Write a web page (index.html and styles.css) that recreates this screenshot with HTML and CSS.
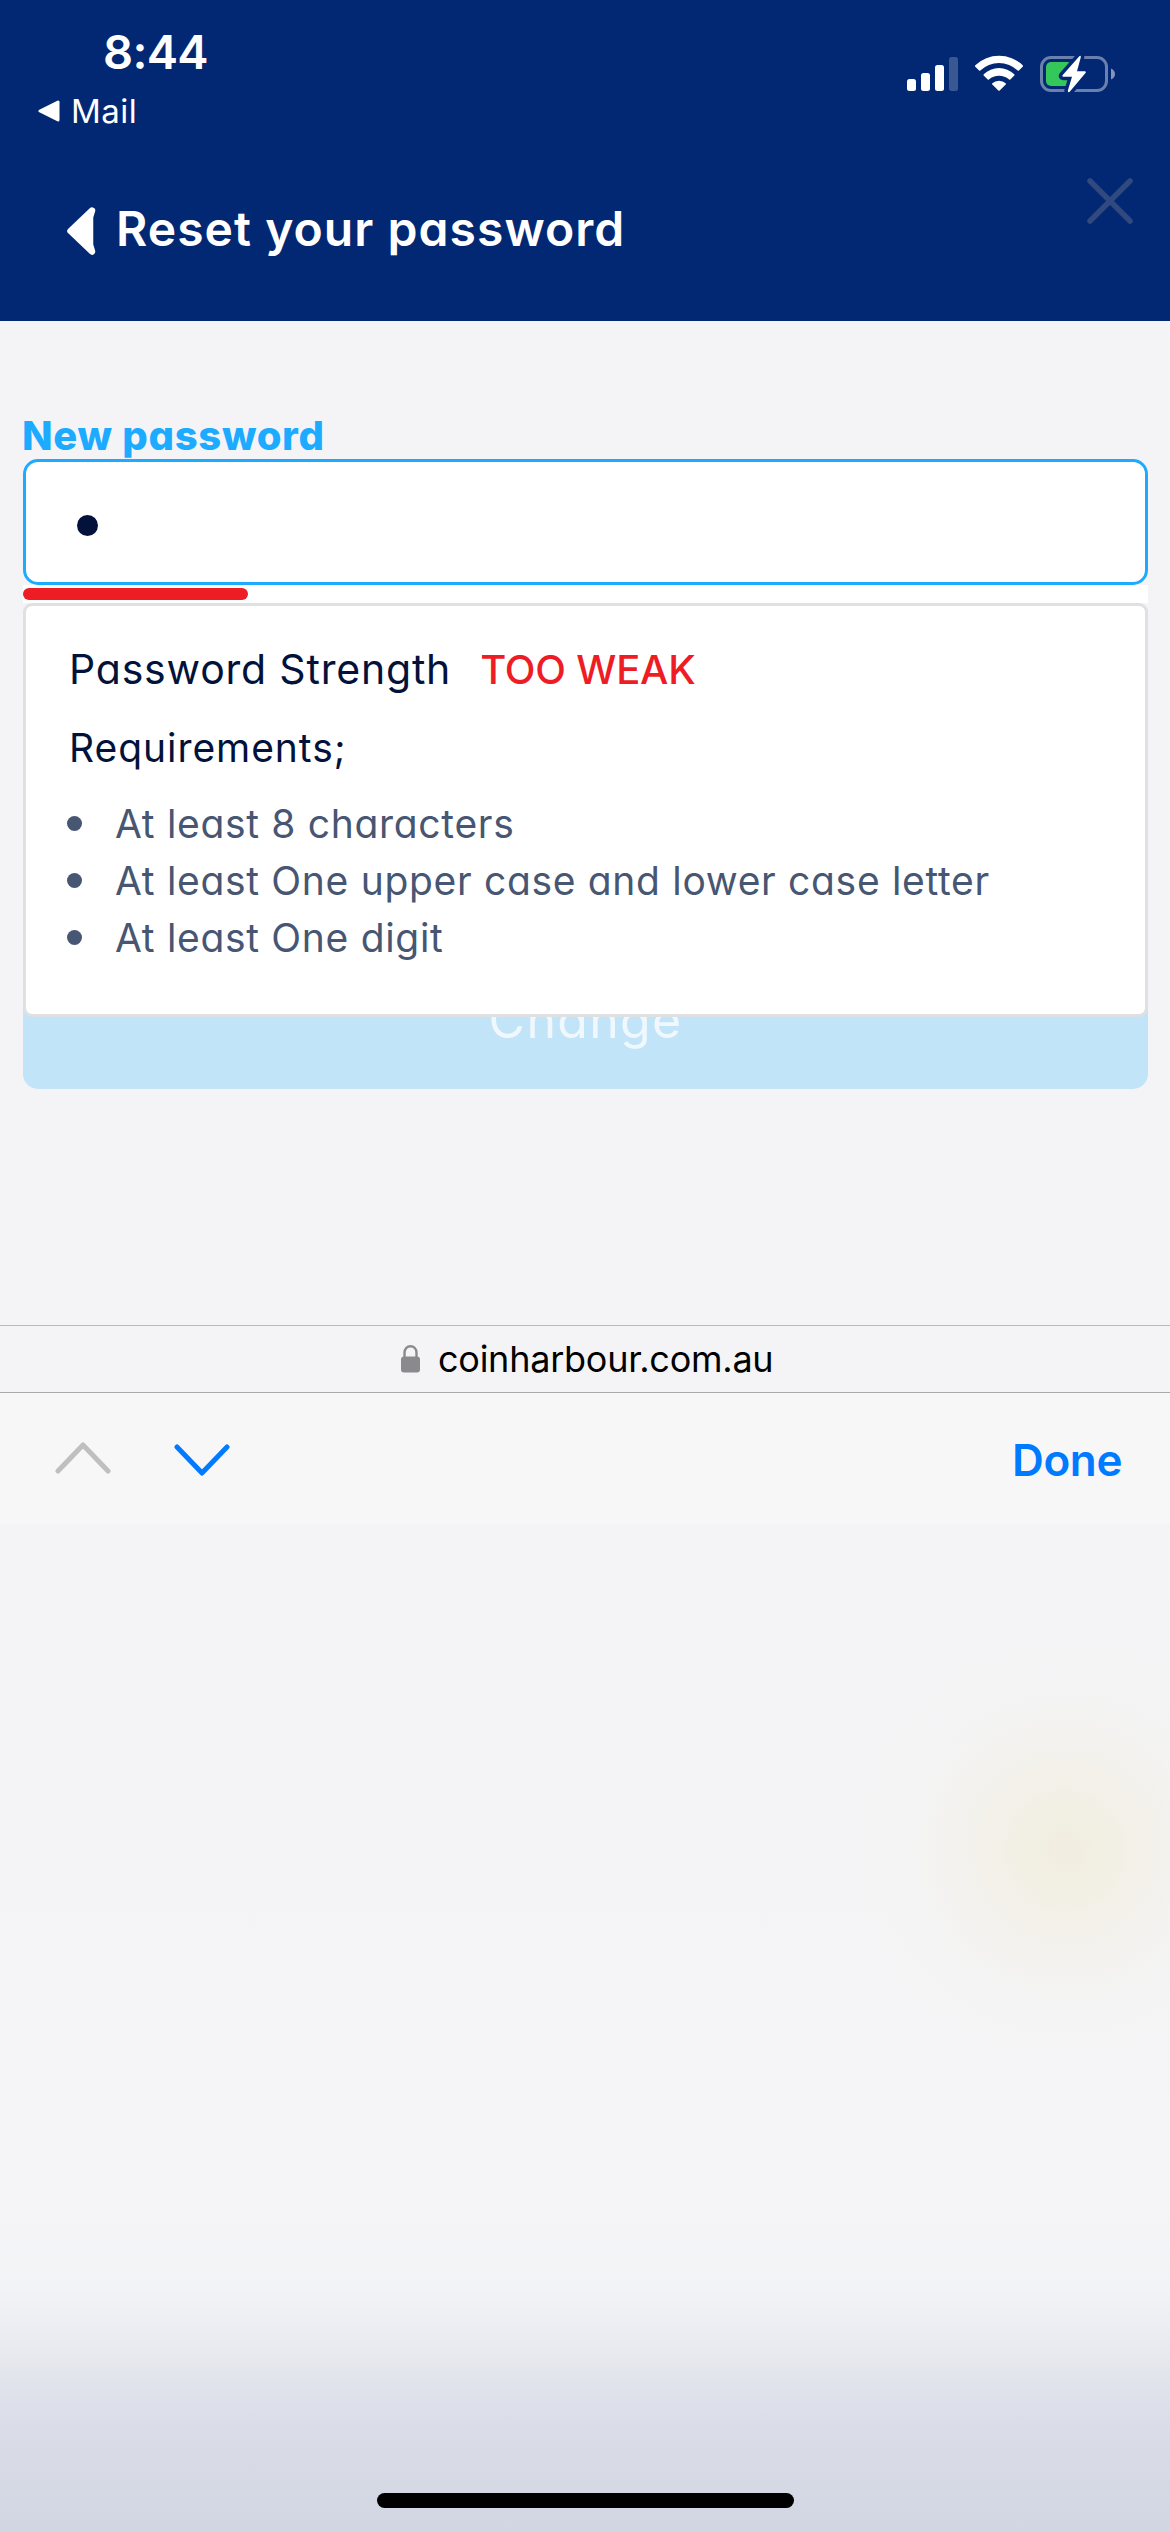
FILE: index.html
```html
<!DOCTYPE html>
<html lang="en">
<head>
<meta charset="utf-8">
<title>Reset your password</title>
<link rel="stylesheet" href="styles.css">
</head>
<body>
<header class="header">
  <div class="status">
    <div class="status-left">
      <div class="time"><span>8:44</span></div>
      <div class="back-app">
        <svg width="22" height="22" viewBox="0 0 22 22"><path d="M20 2v18L2 11z" fill="#fff" stroke="#fff" stroke-width="3" stroke-linejoin="round"/></svg>
        <span>Mail</span>
      </div>
    </div>
    <svg class="status-icons" width="210" height="42" viewBox="906 53 210 42">
      <g fill="#fff">
        <rect x="907" y="79" width="9" height="12" rx="2.5"/>
        <rect x="921" y="73" width="9" height="18" rx="2.5"/>
        <rect x="935" y="65" width="9" height="26" rx="2.5"/>
        <rect x="949" y="57" width="9" height="34" rx="2.5" opacity=".22"/>
        <path d="M975.3 65.2Q974.600 66 975.300 66.800L979.100 70.600Q979.700 71 980.300 70.500A27 27 0 0 1 1017.700 70.500Q1018.300 71 1018.900 70.600L1022.700 66.800Q1023.400 66 1022.700 65.200A34.500 34.500 0 0 0 975.300 65.200Z"/>
        <path d="M983.700 74.300Q983.200 75 983.700 75.500L987.700 79.400Q988.300 79.900 988.900 79.400A15.500 15.500 0 0 1 1009.100 79.400Q1009.700 79.900 1010.300 79.400L1014.300 75.500Q1014.800 75 1014.300 74.300A22 22 0 0 0 983.700 74.300Z"/>
        <path d="M992.300 83.300Q991.800 84 992.300 84.500L998.300 90.500Q999 91.200 999.700 90.500L1005.700 84.500Q1006.200 84 1005.700 83.300A10 10 0 0 0 992.300 83.300Z"/>
      </g>
      <rect x="1041.500" y="57.500" width="65" height="33" rx="9.500" fill="none" stroke="#6b80ad" stroke-width="3"/>
      <path d="M1111 68.500Q1115 70.500 1115 74T1111 79.500Z" fill="#8594ba"/>
      <rect x="1046" y="62" width="26" height="24" rx="5" fill="#34c759"/>
      <path class="bolt" d="M1079.300 56.200L1062.500 75.200Q1061.700 76.600 1063.300 76.700H1072L1067.800 90.800Q1067.700 93 1069.700 91.800L1085.700 72.700Q1086.500 71.300 1084.900 71.200H1077L1080.800 57.200Q1081 55 1079.300 56.200Z"/>
    </svg>
  </div>
  <div class="title-row">
    <svg width="29" height="48" viewBox="0 0 29 48"><path d="M25 3.500L3.500 24L25 44.500L23 38V10Z" fill="#fff" stroke="#fff" stroke-width="6.500" stroke-linejoin="round"/></svg>
    <h1><span>Reset your password</span></h1>
    <svg class="close" width="46" height="46" viewBox="0 0 46 46"><path d="M3 3L43 43M43 3L3 43" stroke="#30497f" stroke-width="5.500" stroke-linecap="round"/></svg>
  </div>
</header>

<main class="form">
  <label class="label"><span>New password</span></label>
  <div class="field">
    <div class="input"><i class="mask"></i></div>
    <div class="meter"><div class="meter-fill"></div></div>
    <section class="hint">
      <p class="strength"><span>Password Strength</span><strong>TOO WEAK</strong></p>
      <p class="req"><span>Requirements;</span></p>
      <ul>
        <li><span>At least 8 characters</span></li>
        <li><span>At least One upper case and lower case letter</span></li>
        <li><span>At least One digit</span></li>
      </ul>
    </section>
  </div>
  <div class="submit"><span>Change</span></div>
</main>

<div class="address">
  <svg width="19" height="28" viewBox="0 0 19 28"><path d="M3.500 13V8C3.500 -1 15.500 -1 15.500 8V13" fill="none" stroke="#8a898e" stroke-width="2.400"/><rect y="11.500" width="19" height="16" rx="3" fill="#8a898e"/></svg>
  <span>coinharbour.com.au</span>
</div>
<nav class="accessory">
  <svg width="56" height="36" viewBox="0 0 56 36"><path d="M3 30L28 4L53 30" fill="none" stroke="#bfbfbf" stroke-width="5" stroke-linecap="round" stroke-linejoin="round"/></svg>
  <svg width="56" height="36" viewBox="0 0 56 36"><path d="M3 6L28 32L53 6" fill="none" stroke="#007aff" stroke-width="5" stroke-linecap="round" stroke-linejoin="round"/></svg>
  <span class="done">Done</span>
</nav>
<div class="keyboard"><div class="home"></div></div>
</body>
</html>
```
FILE: styles.css
```css
* { box-sizing: border-box; margin: 0; padding: 0; }
body {
  width: 1170px;
  height: 2532px;
  display: flex;
  flex-direction: column;
  background: #f4f4f7;
  font-family: Inter, "Liberation Sans", sans-serif;
  white-space: nowrap;
  overflow: hidden;
}
svg { display: block; flex: none; }
.header { height: 321px; background: #022873; color: #fff; }
.status { height: 131px; display: flex; justify-content: space-between; padding: 22px 54px 0 38px; }
.time { padding-left: 65px; font-size: 47px; line-height: 60px; font-weight: 600; letter-spacing: -.7px; }
.back-app { margin-top: 9px; display: flex; align-items: center; gap: 11px; font-size: 33px; line-height: 40px; font-weight: 400; letter-spacing: .5px; }
.status-icons { margin-top: 31px; }
.bolt { fill: #fff; stroke: #022873; stroke-width: 7px; paint-order: stroke; stroke-linejoin: round; }
.title-row { height: 190px; display: flex; align-items: flex-start; padding: 68px 37px 0 67px; }
.title-row svg:first-child { margin-top: 8px; }
h1 { margin-left: 20px; font-size: 48px; line-height: 59px; font-weight: 600; letter-spacing: 1.05px; }
h1, .form { font-feature-settings: "cv11"; }
.title-row .close { margin: -21px 0 0 auto; }

.form { height: 1004px; padding: 90px 22px 0 23px; color: #03123a; }
.label { display: block; height: 48px; margin-left: -1px; font-size: 40px; line-height: 49px; font-weight: 800; letter-spacing: .7px; color: #1cabff; }
.field { position: relative; height: 144px; }
.input { position: relative; height: 126px; border: 3px solid #1cabff; border-radius: 15px; background: #fff; display: flex; align-items: center; padding-left: 51px; padding-top: 7px; }
.mask { width: 21px; height: 21px; border-radius: 50%; background: #03123a; }
.meter { height: 18px; padding-top: 3px; background: #fff; }
.meter-fill { width: 20%; height: 12px; border-radius: 6px; background: #ee1c24; }
.hint { position: absolute; top: 144px; left: 0; right: 0; height: 414px; border: 3px solid #dfe0e2; border-radius: 9px; background: #fff; padding: 34px 0 0 43px; }
.strength { display: flex; gap: 29px; font-size: 41px; line-height: 59px; height: 60px; letter-spacing: .8px; }
.strength strong { font-size: 40px; font-weight: 500; letter-spacing: -.2px; color: #ee1c24; }
.req { margin-top: 23px; font-size: 39px; line-height: 50px; letter-spacing: .95px; }
ul { margin-top: 22px; list-style: none; color: #475672; }
li { display: flex; align-items: center; gap: 33px; height: 57px; margin-left: -2px; font-size: 39px; line-height: 57px; letter-spacing: .68px; }
li::before { content: ""; width: 15px; height: 15px; border-radius: 50%; background: #475672; }
.submit { margin-top: 351px; height: 135px; border-radius: 15px; background: #c2e4f8; color: #f0f8fd; font-size: 50px; line-height: 133px; letter-spacing: 1.3px; text-align: center; }

.address { height: 68px; border-top: 1px solid #b9b9bb; border-bottom: 1px solid #a9a9ab; display: flex; align-items: center; padding: 0 0 1px 401px; gap: 18px; font-size: 36px; letter-spacing: -.25px; color: #000; }
.accessory { height: 131px; background: #f7f7f7; display: flex; align-items: center; padding: 0 48px 0 55px; gap: 63px; }
.done { margin-left: auto; padding-top: 2px; font-size: 44px; font-weight: 600; letter-spacing: -.4px; color: #007aff; }
.keyboard {
  flex: 1;
  display: flex;
  align-items: flex-end;
  justify-content: center;
  padding-bottom: 24px;
  background:
    radial-gradient(circle at 1065px 326px, #f1eee0 0, rgba(242, 239, 226, .9) 40px, rgba(243, 240, 231, .75) 90px, rgba(243, 242, 238, .5) 140px, rgba(244, 244, 242, .3) 190px, rgba(244, 244, 247, 0) 260px),
    linear-gradient(#f4f4f7 0, #f5f5f8 686px, #f2f3f6 766px, #e9eaef 826px, #e0e3eb 860px, #dadde8 906px, #d1d6e2 1008px);
}
.home { width: 417px; height: 15px; border-radius: 8px; background: #000; }
```
